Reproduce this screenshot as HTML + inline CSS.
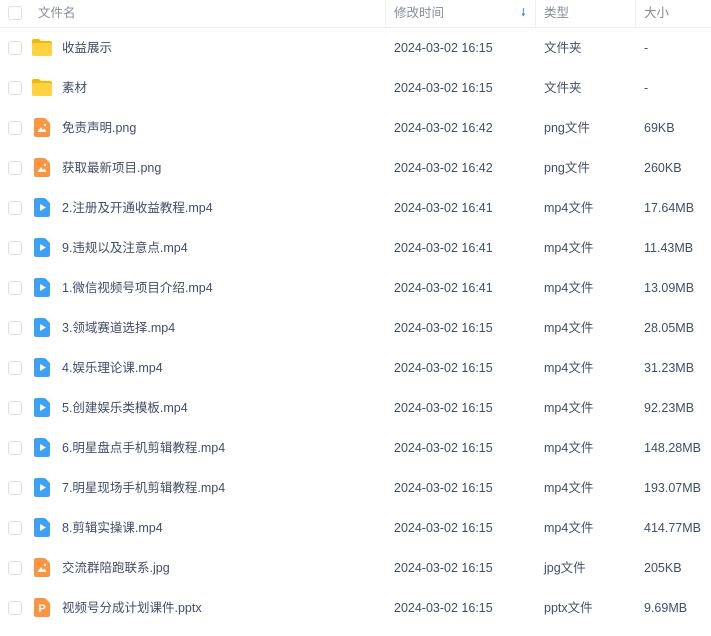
<!DOCTYPE html>
<html><head><meta charset="utf-8"><style>
body{margin:0;width:711px;height:636px;background:#fff;font-family:"Liberation Sans","Noto Sans CJK SC",sans-serif;overflow:hidden;position:relative}
.h{position:absolute;top:0;left:0;width:711px;height:27px;border-bottom:1px solid #eef0f3}
.t{position:absolute;font-size:12.5px;color:#424e67;white-space:nowrap;line-height:16px}
.hd{color:#878c9c;font-size:12.5px}
.cb{position:absolute;left:8px;width:12px;height:12px;border:1px solid #dcdfe6;border-radius:3px;background:#fff}
.sep{position:absolute;top:0;width:1px;height:27px;background:#eef0f3}
.ic{position:absolute;left:34px;width:16px;height:19px;border-radius:2px 6px 2px 2px}
.fo{position:absolute;left:32px;width:20px;height:17px}
</style></head><body>
<div class="h"></div>
<div class="cb" style="top:6px"></div>
<div class="t hd" style="left:38px;top:5px">文件名</div>
<div class="sep" style="left:385px"></div><div class="sep" style="left:535px"></div><div class="sep" style="left:635px"></div>
<div class="t hd" style="left:394px;top:5px">修改时间</div>
<div class="t" style="left:521px;top:5px;color:#2a8bf2;font-size:11px">&#129047;</div>
<div class="t hd" style="left:544px;top:5px">类型</div>
<div class="t hd" style="left:644px;top:5px">大小</div>
<div id="rows"></div>
<script>
var R=[["f","收益展示","2024-03-02 16:15","文件夹","-"],["f","素材","2024-03-02 16:15","文件夹","-"],
["i","免责声明.png","2024-03-02 16:42","png文件","69KB"],["i","获取最新项目.png","2024-03-02 16:42","png文件","260KB"],
["v","2.注册及开通收益教程.mp4","2024-03-02 16:41","mp4文件","17.64MB"],["v","9.违规以及注意点.mp4","2024-03-02 16:41","mp4文件","11.43MB"],
["v","1.微信视频号项目介绍.mp4","2024-03-02 16:41","mp4文件","13.09MB"],["v","3.领域赛道选择.mp4","2024-03-02 16:15","mp4文件","28.05MB"],
["v","4.娱乐理论课.mp4","2024-03-02 16:15","mp4文件","31.23MB"],["v","5.创建娱乐类模板.mp4","2024-03-02 16:15","mp4文件","92.23MB"],
["v","6.明星盘点手机剪辑教程.mp4","2024-03-02 16:15","mp4文件","148.28MB"],["v","7.明星现场手机剪辑教程.mp4","2024-03-02 16:15","mp4文件","193.07MB"],
["v","8.剪辑实操课.mp4","2024-03-02 16:15","mp4文件","414.77MB"],["i","交流群陪跑联系.jpg","2024-03-02 16:15","jpg文件","205KB"],
["p","视频号分成计划课件.pptx","2024-03-02 16:15","pptx文件","9.69MB"]];
var h="";
R.forEach(function(r,i){var c=48+40*i;
h+='<div class="cb" style="top:'+(c-7)+'px"></div>';
if(r[0]=="f")h+='<svg class="fo" style="top:'+(c-9)+'px" viewBox="0 0 20 17"><path d="M0 2Q0 0 2 0H7L9 2H18Q20 2 20 4V15Q20 17 18 17H2Q0 17 0 15Z" fill="#f9b800"/><rect x="0" y="4" width="20" height="13" rx="2" fill="#ffd23f"/></svg>';
else{var col=r[0]=="v"?"#3ea0f6":"#fd9440";var inner=r[0]=="v"?'<path d="M6 6L12 9.5L6 13Z" fill="#fff"/>':r[0]=="p"?'<text x="8" y="14" font-size="11" font-weight="bold" fill="#fff" text-anchor="middle" font-family="Liberation Sans">P</text>':'<path d="M3.5 14L7 9L9 12L10.5 10.5L12.5 14Z" fill="#fff"/><circle cx="11" cy="7" r="1.2" fill="#fff"/>';
h+='<svg class="ic" style="top:'+(c-10)+'px" viewBox="0 0 16 19"><path d="M2 0H11L16 5V17Q16 19 14 19H2Q0 19 0 17V2Q0 0 2 0Z" fill="'+col+'"/>'+inner+'</svg>';}
h+='<div class="t" style="left:62px;top:'+(c-8)+'px">'+r[1]+'</div><div class="t" style="left:394px;top:'+(c-8)+'px">'+r[2]+'</div><div class="t" style="left:544px;top:'+(c-8)+'px">'+r[3]+'</div><div class="t" style="left:644px;top:'+(c-8)+'px">'+r[4]+'</div>';});
document.getElementById("rows").innerHTML=h;
</script>
</body></html>
